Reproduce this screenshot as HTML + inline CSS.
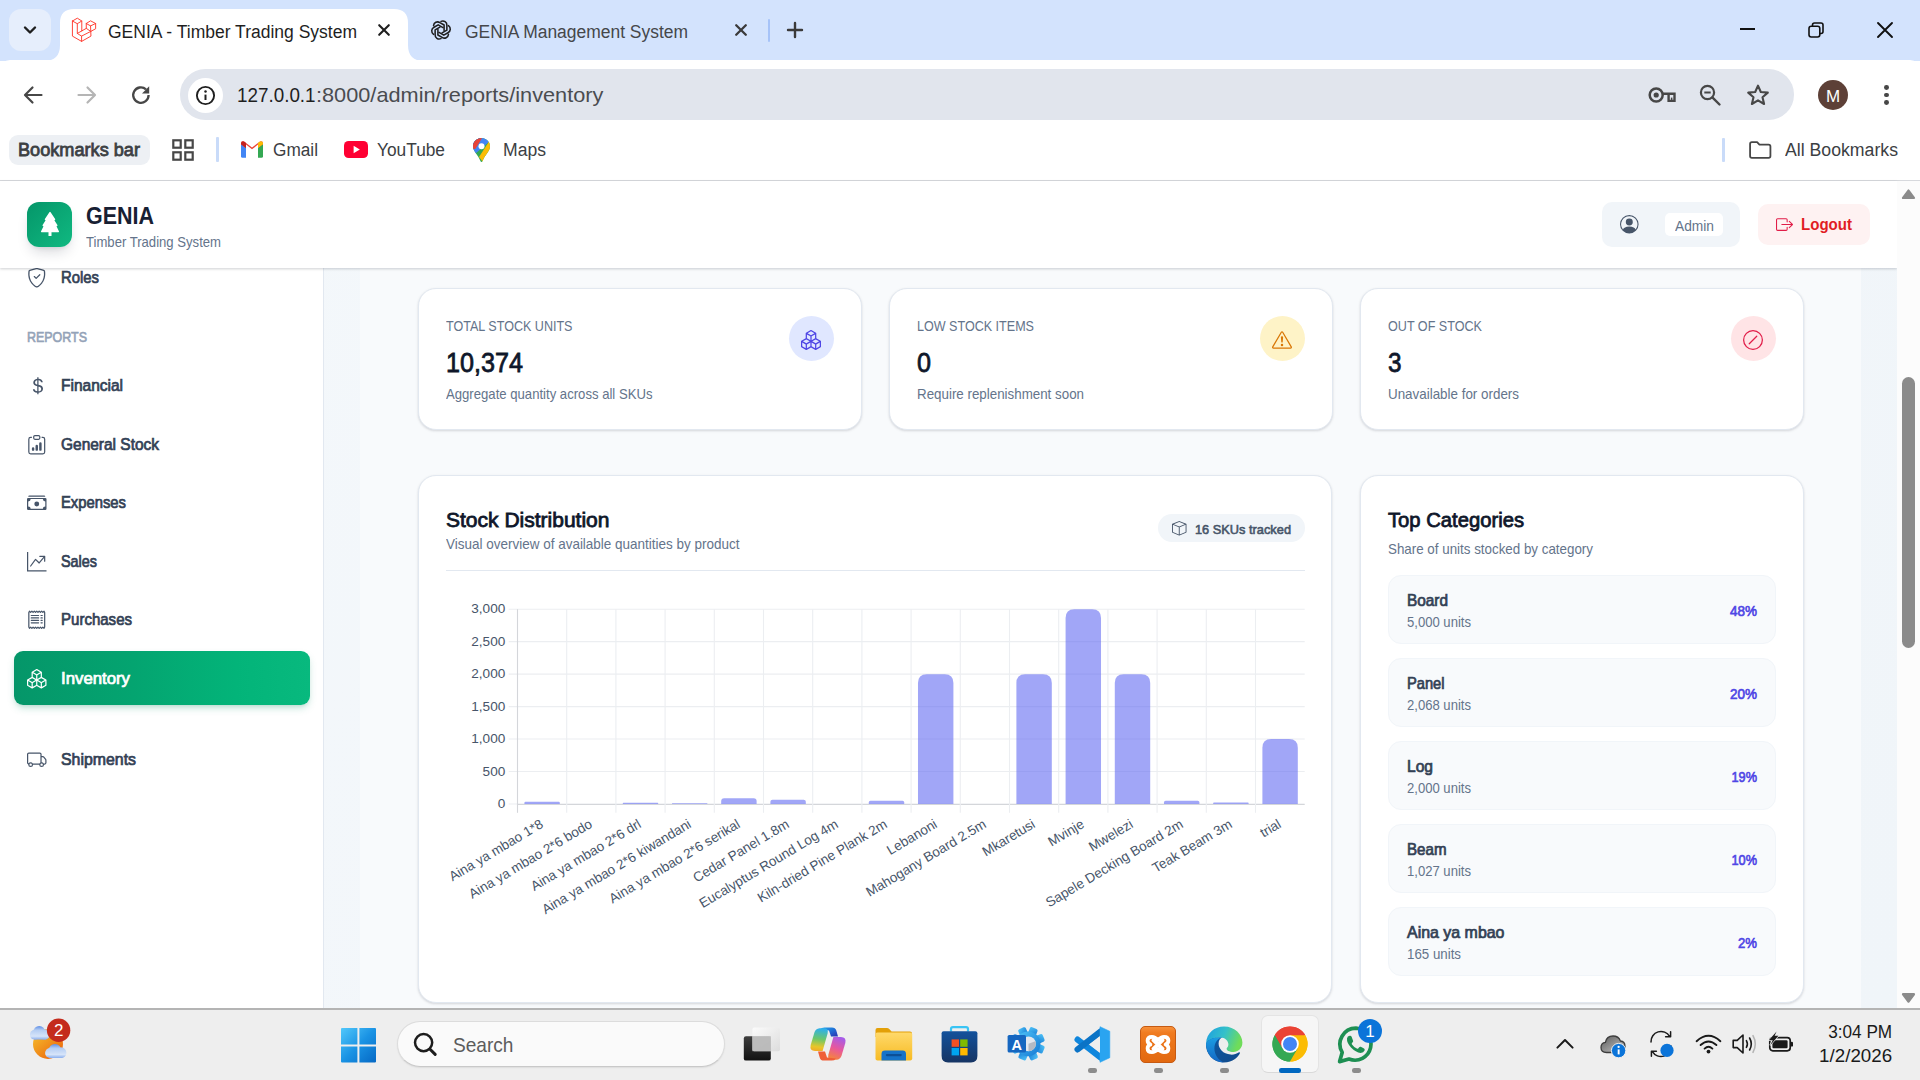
<!DOCTYPE html>
<html><head><meta charset="utf-8"><title>GENIA - Timber Trading System</title>
<style>
html,body{margin:0;padding:0}
body{width:1920px;height:1080px;overflow:hidden;background:#fff;font-family:"Liberation Sans",sans-serif;position:relative}
.a{position:absolute;box-sizing:border-box}
.t{position:absolute;white-space:pre;line-height:1;font-family:"Liberation Sans",sans-serif}
svg{overflow:visible}
</style></head><body>
<div class="a" style="left:0px;top:0px;width:1920px;height:61px;background:#d3e3fd"></div>
<div class="a" style="left:9px;top:9px;width:42px;height:42px;background:#e6eefc;border-radius:12px"></div>
<svg class="a" style="left:23px;top:25px;" width="14" height="10" viewBox="0 0 14 10"><path d="M2 2.5 L7 7.5 L12 2.5" fill="none" stroke="#1f1f1f" stroke-width="2.4" stroke-linecap="round" stroke-linejoin="round"/></svg>
<svg class="a" style="left:44px;top:9px;" width="380" height="52" viewBox="0 0 380 52"><path d="M0 52 Q16 52 16 36 L16 14 Q16 0 30 0 L350 0 Q364 0 364 14 L364 36 Q364 52 380 52 Z" fill="#fff"/></svg>
<div class="a" style="left:0px;top:60px;width:1920px;height:68px;background:#fff;border-radius:10px 10px 0 0"></div>
<svg class="a" style="left:72px;top:18px;" width="24" height="24" viewBox="0 0 24 24"><path d="M0.42 3.03 L5.31 0.18 L9.79 3.03 L5.31 5.68 L0.42 3.03 M0.42 3.03 L0.42 18.1 L9.59 23.4 L18.96 18.1 L18.75 13.42 M5.31 5.68 L5.31 15.46 L9.59 18.1 L9.59 23.4 M9.59 18.1 L18.75 13.42 M9.79 3.03 L9.79 12.9 M5.31 15.46 L14.27 10.37 M14.27 5.48 L18.55 2.83 L23.64 5.48 L18.55 7.92 L14.27 5.48 M14.27 5.48 L14.27 10.37 L18.75 13.42 L23.64 10.77 L23.64 5.48 M18.55 7.92 L18.75 13.42" fill="none" stroke="#ff3a2e" stroke-width="0.95" stroke-linejoin="round" stroke-linecap="round"/></svg>
<span class="t" style="left:108.00px;top:23.25px;font-size:18px;font-weight:400;color:#1f1f1f;transform:scaleX(0.9724);transform-origin:0 0;">GENIA - Timber Trading System</span>
<svg class="a" style="left:378px;top:24px;" width="12" height="12" viewBox="0 0 12 12"><path d="M1.2 1.2 L10.8 10.8 M10.8 1.2 L1.2 10.8" stroke="#1f1f1f" stroke-width="2.1" stroke-linecap="round"/></svg>
<svg class="a" style="left:430px;top:19px;" width="22" height="22" viewBox="0 0 24 24"><g fill="none" stroke="#1f1f1f" stroke-width="1.7" stroke-linecap="round" stroke-linejoin="round"><path d="M12 2.6 C15.2 1.2 18.6 3.4 18.4 6.9 L18.4 12.2 L13.2 15.2" transform="rotate(0 12 12)"/><path d="M12 2.6 C15.2 1.2 18.6 3.4 18.4 6.9 L18.4 12.2 L13.2 15.2" transform="rotate(60 12 12)"/><path d="M12 2.6 C15.2 1.2 18.6 3.4 18.4 6.9 L18.4 12.2 L13.2 15.2" transform="rotate(120 12 12)"/><path d="M12 2.6 C15.2 1.2 18.6 3.4 18.4 6.9 L18.4 12.2 L13.2 15.2" transform="rotate(180 12 12)"/><path d="M12 2.6 C15.2 1.2 18.6 3.4 18.4 6.9 L18.4 12.2 L13.2 15.2" transform="rotate(240 12 12)"/><path d="M12 2.6 C15.2 1.2 18.6 3.4 18.4 6.9 L18.4 12.2 L13.2 15.2" transform="rotate(300 12 12)"/></g></svg>
<span class="t" style="left:465.00px;top:23.25px;font-size:18px;font-weight:400;color:#45474a;transform:scaleX(0.9691);transform-origin:0 0;">GENIA Management System</span>
<svg class="a" style="left:735px;top:24px;" width="12" height="12" viewBox="0 0 12 12"><path d="M1.2 1.2 L10.8 10.8 M10.8 1.2 L1.2 10.8" stroke="#3a3a3a" stroke-width="2.3" stroke-linecap="round"/></svg>
<div class="a" style="left:767.8px;top:18.5px;width:2.7px;height:23px;background:#a6c3f8;border-radius:1.3px"></div>
<svg class="a" style="left:787px;top:22px;" width="16" height="16" viewBox="0 0 16 16"><path d="M8 1 V15 M1 8 H15" stroke="#3a3a3a" stroke-width="2.4" stroke-linecap="round"/></svg>
<div class="a" style="left:1740px;top:28px;width:15px;height:2px;background:#111"></div>
<svg class="a" style="left:1808px;top:22px;" width="16" height="16" viewBox="0 0 16 16"><path d="M4.5 4 V3 Q4.5 1 6.5 1 H13 Q15 1 15 3 V9.5 Q15 11.5 13 11.5 H12" fill="none" stroke="#111" stroke-width="1.6"/><rect x="1" y="4.2" width="10.8" height="10.8" rx="2.2" fill="none" stroke="#111" stroke-width="1.6"/></svg>
<svg class="a" style="left:1877px;top:22px;" width="16" height="16" viewBox="0 0 16 16"><path d="M1 1 L15 15 M15 1 L1 15" stroke="#111" stroke-width="1.9" stroke-linecap="round"/></svg>
<svg class="a" style="left:23px;top:86px;" width="20" height="18" viewBox="0 0 20 18"><path d="M9.5 1.5 L2 9 L9.5 16.5 M2.4 9 H18.5" fill="none" stroke="#474747" stroke-width="2.2" stroke-linecap="round" stroke-linejoin="round"/></svg>
<svg class="a" style="left:77px;top:86px;" width="20" height="18" viewBox="0 0 20 18"><path d="M10.5 1.5 L18 9 L10.5 16.5 M17.6 9 H1.5" fill="none" stroke="#b5b5b5" stroke-width="2.2" stroke-linecap="round" stroke-linejoin="round"/></svg>
<svg class="a" style="left:130px;top:84px;" width="22" height="22" viewBox="0 0 22 22"><path d="M18.6 11 A7.7 7.7 0 1 1 16 5.3" fill="none" stroke="#474747" stroke-width="2.3" stroke-linecap="butt"/><path d="M19.2 2.2 V9.4 H12 Z" fill="#474747"/></svg>
<div class="a" style="left:180px;top:69px;width:1614px;height:50.6px;background:#e1e5ed;border-radius:25.3px"></div>
<div class="a" style="left:188px;top:78px;width:35px;height:35px;background:#fff;border-radius:50%"></div>
<svg class="a" style="left:195px;top:85px;" width="21" height="21" viewBox="0 0 21 21"><circle cx="10.5" cy="10.5" r="8.6" fill="none" stroke="#1f1f1f" stroke-width="1.9"/><path d="M10.5 9.6 V15" stroke="#1f1f1f" stroke-width="2" stroke-linecap="butt"/><circle cx="10.5" cy="6.5" r="1.25" fill="#1f1f1f"/></svg>
<span class="t" style="left:237.00px;top:84.25px;font-size:21px;font-weight:400;color:#1f1f1f;transform:scaleX(0.8973);transform-origin:0 0;">127.0.0.1</span>
<span class="t" style="left:315.80px;top:84.25px;font-size:21px;font-weight:400;color:#4a4c50;transform:scaleX(1.0345);transform-origin:0 0;">:8000/admin/reports/inventory</span>
<svg class="a" style="left:1648px;top:86px;" width="28" height="18" viewBox="0 0 28 18"><circle cx="8.2" cy="9" r="6.5" fill="none" stroke="#474747" stroke-width="2.5"/><circle cx="8.2" cy="9" r="2.6" fill="#474747"/><path d="M14.4 7.8 H26.5 V14.9 H20.6 V9" fill="none" stroke="#474747" stroke-width="2.4" stroke-linejoin="miter"/><rect x="22.9" y="11.6" width="1.5" height="3.4" fill="#474747"/></svg>
<svg class="a" style="left:1698px;top:83px;" width="24" height="24" viewBox="0 0 24 24"><circle cx="9.5" cy="9.5" r="6.6" fill="none" stroke="#474747" stroke-width="2.2"/><path d="M14.6 14.6 L21.5 21.5" stroke="#474747" stroke-width="2.4" stroke-linecap="round"/><path d="M6.3 9.5 H12.7" stroke="#474747" stroke-width="2"/></svg>
<svg class="a" style="left:1746px;top:83px;" width="24" height="24" viewBox="0 0 24 24"><path d="M12 2.6 L14.8 9 L21.8 9.6 L16.5 14.2 L18.1 21 L12 17.4 L5.9 21 L7.5 14.2 L2.2 9.6 L9.2 9 Z" fill="none" stroke="#474747" stroke-width="2.1" stroke-linejoin="round"/></svg>
<div class="a" style="left:1818px;top:80px;width:30px;height:30px;background:#5d4037;border-radius:50%"></div>
<span class="t" style="left:1825.91px;top:88.25px;font-size:17px;font-weight:400;color:#fff;">M</span>
<div class="a" style="left:1884.4px;top:84.8px;width:4.8px;height:4.8px;background:#474747;border-radius:50%"></div>
<div class="a" style="left:1884.4px;top:92.6px;width:4.8px;height:4.8px;background:#474747;border-radius:50%"></div>
<div class="a" style="left:1884.4px;top:100.39999999999999px;width:4.8px;height:4.8px;background:#474747;border-radius:50%"></div>
<div class="a" style="left:0px;top:128px;width:1920px;height:52px;background:#fff"></div>
<div class="a" style="left:0px;top:180px;width:1920px;height:1px;background:#d7d9dd"></div>
<div class="a" style="left:9px;top:135px;width:141px;height:30px;background:#edf0f4;border-radius:9px"></div>
<span class="t" style="left:18.00px;top:141.25px;font-size:18px;font-weight:400;-webkit-text-stroke:0.78px #3c4043;color:#3c4043;transform:scaleX(1.0079);transform-origin:0 0;">Bookmarks bar</span>
<svg class="a" style="left:172px;top:139px;" width="22" height="22" viewBox="0 0 22 22"><rect x="1.3" y="1.3" width="7.4" height="7.4" fill="none" stroke="#474747" stroke-width="2.2"/><rect x="1.3" y="13.3" width="7.4" height="7.4" fill="none" stroke="#474747" stroke-width="2.2"/><rect x="13.3" y="1.3" width="7.4" height="7.4" fill="none" stroke="#474747" stroke-width="2.2"/><rect x="13.3" y="13.3" width="7.4" height="7.4" fill="none" stroke="#474747" stroke-width="2.2"/></svg>
<div class="a" style="left:215.9px;top:137px;width:2.8px;height:25px;background:#c9dbf9;border-radius:1px"></div>
<svg class="a" style="left:241px;top:141px;" width="22" height="17" viewBox="0 0 22 17"><path d="M0 2.2 V15.2 Q0 16.7 1.5 16.7 H5 V6.3 Z" fill="#4285f4"/><path d="M22 2.2 V15.2 Q22 16.7 20.5 16.7 H17 V6.3 Z" fill="#34a853"/>
<path d="M0 2.4 Q0 0.3 2 0.3 Q2.8 0.3 3.4 0.8 L11 6.6 L18.6 0.8 Q19.2 0.3 20 0.3 Q22 0.3 22 2.4 V3.2 L17 7 V3.6 L11 8.2 L5 3.6 V7 L0 3.2 Z" fill="#ea4335"/><path d="M0 2.4 V3.2 L5 7 V2.1 L3.4 0.8 Q2.8 0.3 2 0.3 Q0 0.3 0 2.4Z" fill="#c5221f"/><path d="M22 2.4 V3.2 L17 7 V2.1 L18.6 0.8 Q19.2 0.3 20 0.3 Q22 0.3 22 2.4Z" fill="#fbbc04"/></svg>
<span class="t" style="left:273.00px;top:141.25px;font-size:18px;font-weight:400;color:#3c4043;transform:scaleX(0.9571);transform-origin:0 0;">Gmail</span>
<svg class="a" style="left:344px;top:141px;" width="24" height="17" viewBox="0 0 24 17"><rect x="0" y="0" width="24" height="17" rx="4.6" fill="#ff0033"/><path d="M9.6 4.8 L15.8 8.5 L9.6 12.2 Z" fill="#fff"/></svg>
<span class="t" style="left:377.00px;top:141.25px;font-size:18px;font-weight:400;color:#3c4043;transform:scaleX(0.9613);transform-origin:0 0;">YouTube</span>
<svg class="a" style="left:473px;top:138px;" width="17" height="24" viewBox="0 0 17 24"><defs><clipPath id="pin"><path d="M8.5 0 C3.8 0 0 3.7 0 8.3 C0 13.5 5.2 17 7.3 22.8 Q7.8 24 8.5 24 Q9.2 24 9.7 22.8 C11.8 17 17 13.5 17 8.3 C17 3.7 13.2 0 8.5 0 Z"/></clipPath></defs>
<g clip-path="url(#pin)"><rect width="17" height="24" fill="#34a853"/><path d="M0 0 H17 L17 3 L2 16 L0 14 Z" fill="#4285f4"/><path d="M0 0 H8 L0 9 Z" fill="#1a73e8"/><path d="M0 0 H9 L13 1 L2 13 L0 10Z" fill="#ea4335" opacity="0"/><path d="M17 2 L17 12 L10 24 L6 19 Z" fill="#fbbc04"/><path d="M0 2 L5.5 6 L2.2 11 L0 11 Z" fill="#ea4335"/><path d="M2 0 H9 L5.5 6 L0 3 Z" fill="#ea4335"/></g><circle cx="8.5" cy="8.2" r="3" fill="#fff"/></svg>
<span class="t" style="left:503.00px;top:141.25px;font-size:18px;font-weight:400;color:#3c4043;transform:scaleX(0.9769);transform-origin:0 0;">Maps</span>
<div class="a" style="left:1722.2px;top:138px;width:2.8px;height:24px;background:#c9dbf9;border-radius:1px"></div>
<svg class="a" style="left:1748.3px;top:141px;" width="24.5" height="18" viewBox="0 0 25 20"><path d="M1.2 3.2 Q1.2 1.2 3.2 1.2 H9 L11.6 4 H21.8 Q23.8 4 23.8 6 V16.8 Q23.8 18.8 21.8 18.8 H3.2 Q1.2 18.8 1.2 16.8 Z" fill="none" stroke="#474747" stroke-width="2" stroke-linejoin="round"/></svg>
<span class="t" style="left:1785.00px;top:141.25px;font-size:18px;font-weight:400;color:#3c4043;transform:scaleX(0.9823);transform-origin:0 0;">All Bookmarks</span>
<div class="a" style="left:0px;top:181px;width:1897px;height:827px;background:linear-gradient(115deg,#f4f8fb 0%,#f2f6fa 50%,#f0f5f9 100%)"></div>
<div class="a" style="left:360px;top:181px;width:1501px;height:827px;background:#f8fafc"></div>
<div class="a" style="left:0px;top:181px;width:324px;height:827px;background:#fff;border-right:1px solid #e2e8f0"></div>
<svg class="a" style="left:27px;top:268px" width="19.5" height="19.5" viewBox="0 0 16 16" fill="#475569"><path d="M5.338 1.59a61 61 0 0 0-2.837.856.48.48 0 0 0-.328.39c-.554 4.157.726 7.19 2.253 9.188a10.7 10.7 0 0 0 2.287 2.233c.346.244.652.42.893.533q.18.085.293.118a1 1 0 0 0 .101.025 1 1 0 0 0 .1-.025q.114-.034.294-.118c.24-.113.547-.29.893-.533a10.7 10.7 0 0 0 2.287-2.233c1.527-1.997 2.807-5.031 2.253-9.188a.48.48 0 0 0-.328-.39c-.651-.213-1.75-.56-2.837-.855C9.552 1.29 8.531 1.067 8 1.067c-.53 0-1.552.223-2.662.524zM5.072.56C6.157.265 7.31 0 8 0s1.843.265 2.928.56c1.11.3 2.229.655 2.887.87a1.54 1.54 0 0 1 1.044 1.262c.596 4.477-.787 7.795-2.465 9.99a11.8 11.8 0 0 1-2.517 2.453 7 7 0 0 1-1.048.625c-.28.132-.581.24-.829.24s-.548-.108-.829-.24a7 7 0 0 1-1.048-.625 11.8 11.8 0 0 1-2.517-2.453C1.928 10.487.545 7.169 1.141 2.692A1.54 1.54 0 0 1 2.185 1.43 63 63 0 0 1 5.072.56"/><path d="M10.854 5.146a.5.5 0 0 1 0 .708l-3 3a.5.5 0 0 1-.708 0l-1.500-1.500a.5.5 0 1 1 .708-.708L7.5 7.793l2.646-2.647a.5.5 0 0 1 .708 0"/></svg>
<span class="t" style="left:61.00px;top:269.75px;font-size:16px;font-weight:400;-webkit-text-stroke:0.72px #334155;color:#334155;transform:scaleX(0.9290);transform-origin:0 0;">Roles</span>
<span class="t" style="left:27.00px;top:330.25px;font-size:14px;font-weight:400;-webkit-text-stroke:0.63px #94a3b8;color:#94a3b8;transform:scaleX(0.8897);transform-origin:0 0;">REPORTS</span>
<svg class="a" style="left:27.5px;top:376px" width="19.5" height="19.5" viewBox="0 0 16 16" fill="#475569"><path d="M4 10.781c.148 1.667 1.513 2.85 3.591 3.003V15h1.043v-1.216c2.27-.179 3.678-1.438 3.678-3.3 0-1.59-.947-2.51-2.956-3.028l-.722-.187V3.467c1.122.11 1.879.714 2.07 1.616h1.47c-.166-1.6-1.54-2.748-3.54-2.875V1H7.591v1.233c-1.939.23-3.27 1.472-3.27 3.156 0 1.454.966 2.483 2.661 2.917l.61.162v4.031c-1.149-.17-1.94-.8-2.131-1.718zm3.391-3.836c-1.043-.263-1.6-.825-1.6-1.616 0-.944.704-1.641 1.8-1.828v3.495l-.2-.05zm1.591 1.872c1.287.323 1.852.859 1.852 1.769 0 1.097-.826 1.828-2.2 1.939V8.73z"/></svg>
<span class="t" style="left:61.00px;top:377.75px;font-size:16px;font-weight:400;-webkit-text-stroke:0.72px #334155;color:#334155;transform:scaleX(0.9683);transform-origin:0 0;">Financial</span>
<svg class="a" style="left:27px;top:435px" width="19.5" height="19.5" viewBox="0 0 16 16" fill="#475569"><path d="M4 11a1 1 0 1 1 2 0v1a1 1 0 1 1-2 0zm6-4a1 1 0 1 1 2 0v5a1 1 0 1 1-2 0zM7 9a1 1 0 0 1 2 0v3a1 1 0 1 1-2 0z"/><path d="M4 1.5H3a2 2 0 0 0-2 2V14a2 2 0 0 0 2 2h10a2 2 0 0 0 2-2V3.500a2 2 0 0 0-2-2h-1v1h1a1 1 0 0 1 1 1V14a1 1 0 0 1-1 1H3a1 1 0 0 1-1-1V3.500a1 1 0 0 1 1-1h1z"/><path d="M9.5 1a.5.5 0 0 1 .5.5v1a.5.5 0 0 1-.5.5h-3a.5.5 0 0 1-.5-.5v-1a.5.5 0 0 1 .5-.5zm-3-1A1.500 1.500 0 0 0 5 1.500v1A1.500 1.500 0 0 0 6.500 4h3A1.500 1.500 0 0 0 11 2.500v-1A1.500 1.500 0 0 0 9.500 0z"/></svg>
<span class="t" style="left:61.00px;top:436.75px;font-size:16px;font-weight:400;-webkit-text-stroke:0.72px #334155;color:#334155;transform:scaleX(0.9666);transform-origin:0 0;">General Stock</span>
<svg class="a" style="left:27px;top:493px" width="19.5" height="19.5" viewBox="0 0 16 16" fill="#475569"><path d="M1 3a1 1 0 0 1 1-1h12a1 1 0 0 1 1 1zm7 8a2 2 0 1 0 0-4 2 2 0 0 0 0 4"/><path d="M0 5a1 1 0 0 1 1-1h14a1 1 0 0 1 1 1v8a1 1 0 0 1-1 1H1a1 1 0 0 1-1-1zm3 0a2 2 0 0 1-2 2v4a2 2 0 0 1 2 2h10a2 2 0 0 1 2-2V7a2 2 0 0 1-2-2z"/></svg>
<span class="t" style="left:61.00px;top:494.75px;font-size:16px;font-weight:400;-webkit-text-stroke:0.72px #334155;color:#334155;transform:scaleX(0.9251);transform-origin:0 0;">Expenses</span>
<svg class="a" style="left:27px;top:551.5px" width="19.5" height="19.5" viewBox="0 0 16 16" fill="#475569"><path fill-rule="evenodd" d="M0 0h1v15h15v1H0zm10 3.500a.5.5 0 0 1 .5-.5h4a.5.5 0 0 1 .5.5v4a.5.5 0 0 1-1 0V4.900l-3.613 4.417a.5.5 0 0 1-.74.037L7.060 6.767l-3.656 5.027a.5.5 0 0 1-.808-.588l4-5.500a.5.5 0 0 1 .758-.060l2.609 2.610L13.445 4H10.500a.5.5 0 0 1-.5-.5"/></svg>
<span class="t" style="left:61.00px;top:553.75px;font-size:16px;font-weight:400;-webkit-text-stroke:0.72px #334155;color:#334155;transform:scaleX(0.8993);transform-origin:0 0;">Sales</span>
<svg class="a" style="left:27px;top:610px" width="19.5" height="19.5" viewBox="0 0 16 16" fill="#475569"><path d="M1.920.506a.5.5 0 0 1 .434.140L3 1.293l.646-.647a.5.5 0 0 1 .708 0L5 1.293l.646-.647a.5.5 0 0 1 .708 0L7 1.293l.646-.647a.5.5 0 0 1 .708 0L9 1.293l.646-.647a.5.5 0 0 1 .708 0l.646.647.646-.647a.5.5 0 0 1 .708 0l.646.647.646-.647a.5.5 0 0 1 .801.130l.5 1A.5.5 0 0 1 15 2v12a.5.5 0 0 1-.053.224l-.5 1a.5.5 0 0 1-.8.130L13 14.707l-.646.647a.5.5 0 0 1-.708 0L11 14.707l-.646.647a.5.5 0 0 1-.708 0L9 14.707l-.646.647a.5.5 0 0 1-.708 0L7 14.707l-.646.647a.5.5 0 0 1-.708 0L5 14.707l-.646.647a.5.5 0 0 1-.708 0L3 14.707l-.646.647a.5.5 0 0 1-.801-.130l-.5-1A.5.5 0 0 1 1 14V2a.5.5 0 0 1 .053-.224l.5-1a.5.5 0 0 1 .367-.270m.217 1.338L2 2.118v11.764l.137.274.510-.510a.5.5 0 0 1 .707 0l.646.647.646-.646a.5.5 0 0 1 .708 0l.646.646.646-.646a.5.5 0 0 1 .708 0l.646.646.646-.646a.5.5 0 0 1 .708 0l.646.646.646-.646a.5.5 0 0 1 .708 0l.646.646.646-.646a.5.5 0 0 1 .708 0l.509.509.137-.274V2.118l-.137-.274-.510.510a.5.5 0 0 1-.707 0L12 1.707l-.646.647a.5.5 0 0 1-.708 0L10 1.707l-.646.647a.5.5 0 0 1-.708 0L8 1.707l-.646.647a.5.5 0 0 1-.708 0L6 1.707l-.646.647a.5.5 0 0 1-.708 0L4 1.707l-.646.647a.5.5 0 0 1-.708 0z"/><path d="M3 4.500a.5.5 0 0 1 .5-.5h6a.5.5 0 1 1 0 1h-6a.5.5 0 0 1-.5-.5m0 2a.5.5 0 0 1 .5-.5h6a.5.5 0 1 1 0 1h-6a.5.5 0 0 1-.5-.5m0 2a.5.5 0 0 1 .5-.5h6a.5.5 0 1 1 0 1h-6a.5.5 0 0 1-.5-.5m0 2a.5.5 0 0 1 .5-.5h6a.5.5 0 0 1 0 1h-6a.5.5 0 0 1-.5-.5m8-6a.5.5 0 0 1 .5-.5h1a.5.5 0 0 1 0 1h-1a.5.5 0 0 1-.5-.5m0 2a.5.5 0 0 1 .5-.5h1a.5.5 0 0 1 0 1h-1a.5.5 0 0 1-.5-.5m0 2a.5.5 0 0 1 .5-.5h1a.5.5 0 0 1 0 1h-1a.5.5 0 0 1-.5-.5m0 2a.5.5 0 0 1 .5-.5h1a.5.5 0 0 1 0 1h-1a.5.5 0 0 1-.5-.5"/></svg>
<span class="t" style="left:61.00px;top:611.75px;font-size:16px;font-weight:400;-webkit-text-stroke:0.72px #334155;color:#334155;transform:scaleX(0.9392);transform-origin:0 0;">Purchases</span>
<div class="a" style="left:14px;top:651px;width:296px;height:54px;background:linear-gradient(90deg,#059669 0%,#04a470 40%,#03b479 75%,#08b97e 100%);border-radius:9px;box-shadow:0 4px 8px -2px rgba(5,150,105,.30),0 2px 4px -2px rgba(0,0,0,.10)"></div>
<svg class="a" style="left:27px;top:668.5px" width="19.5" height="19.5" viewBox="0 0 16 16" fill="#fff"><path d="M7.752.066a.5.5 0 0 1 .496 0l3.75 2.143a.5.5 0 0 1 .252.434v3.995l3.498 2A.5.5 0 0 1 16 9.07v4.286a.5.5 0 0 1-.252.434l-3.75 2.143a.5.5 0 0 1-.496 0l-3.502-2-3.502 2.001a.5.5 0 0 1-.496 0l-3.75-2.143A.5.5 0 0 1 0 13.357V9.071a.5.5 0 0 1 .252-.434L3.75 6.638V2.643a.5.5 0 0 1 .252-.434zM4.25 7.504 1.508 9.071l2.742 1.567 2.742-1.567zM7.5 9.933l-2.75 1.571v3.134l2.75-1.571zm1 3.134 2.75 1.57v-3.133L8.5 9.933zm.508-3.996 2.742 1.567 2.742-1.567-2.742-1.567zm2.242-2.433V3.504L8.5 5.076V8.21zM7.5 8.21V5.076L4.75 3.504v3.134zM5.258 2.643 8 4.21l2.742-1.567L8 1.076zM15 9.933l-2.75 1.571v3.134L15 13.067zM3.75 14.638v-3.134L1 9.933v3.134z"/></svg>
<span class="t" style="left:61.00px;top:670.75px;font-size:16px;font-weight:400;-webkit-text-stroke:0.72px #fff;color:#fff;transform:scaleX(1.0484);transform-origin:0 0;">Inventory</span>
<svg class="a" style="left:27px;top:750px" width="19.5" height="19.5" viewBox="0 0 16 16" fill="#475569"><path d="M0 3.500A1.500 1.500 0 0 1 1.500 2h9A1.500 1.500 0 0 1 12 3.500V5h1.020a1.500 1.500 0 0 1 1.170.563l1.481 1.850a1.500 1.500 0 0 1 .329.938V10.500a1.500 1.500 0 0 1-1.500 1.500H14a2 2 0 1 1-4 0H5a2 2 0 1 1-3.998-.085A1.500 1.500 0 0 1 0 10.500zm1.294 7.456A2 2 0 0 1 4.732 11h5.536a2 2 0 0 1 .732-.732V3.500a.5.5 0 0 0-.5-.5h-9a.5.5 0 0 0-.5.5v7a.5.5 0 0 0 .294.456M12 10a2 2 0 0 1 1.732 1h.768a.5.5 0 0 0 .5-.5V8.350a.5.5 0 0 0-.110-.312l-1.480-1.850A.5.5 0 0 0 13.020 6H12zm-9 1a1 1 0 1 0 0 2 1 1 0 0 0 0-2m9 0a1 1 0 1 0 0 2 1 1 0 0 0 0-2"/></svg>
<span class="t" style="left:61.00px;top:751.75px;font-size:16px;font-weight:400;-webkit-text-stroke:0.72px #334155;color:#334155;transform:scaleX(0.9921);transform-origin:0 0;">Shipments</span>
<div class="a" style="left:418.4px;top:288.4px;width:443.8px;height:141.4px;background:#fff;border:1px solid #e2e8f0;border-radius:18px;box-shadow:0 1px 3px rgba(15,23,42,.10),0 1px 2px rgba(15,23,42,.06)"></div>
<span class="t" style="left:446.00px;top:319.00px;font-size:14.5px;font-weight:400;color:#64748b;transform:scaleX(0.8658);transform-origin:0 0;">TOTAL STOCK UNITS</span>
<span class="t" style="left:446.00px;top:349.00px;font-size:27.5px;font-weight:400;-webkit-text-stroke:0.78px #0f172a;color:#0f172a;transform:scaleX(0.9153);transform-origin:0 0;">10,374</span>
<span class="t" style="left:446.00px;top:387.00px;font-size:14.5px;font-weight:400;color:#64748b;transform:scaleX(0.9053);transform-origin:0 0;">Aggregate quantity across all SKUs</span>
<div class="a" style="left:789.0px;top:316px;width:45px;height:45px;background:#e0e7ff;border-radius:50%"></div>
<svg class="a" style="left:800.7px;top:329.9px" width="20" height="20" viewBox="0 0 16 16" fill="#4f46e5"><path d="M7.752.066a.5.5 0 0 1 .496 0l3.75 2.143a.5.5 0 0 1 .252.434v3.995l3.498 2A.5.5 0 0 1 16 9.07v4.286a.5.5 0 0 1-.252.434l-3.75 2.143a.5.5 0 0 1-.496 0l-3.502-2-3.502 2.001a.5.5 0 0 1-.496 0l-3.75-2.143A.5.5 0 0 1 0 13.357V9.071a.5.5 0 0 1 .252-.434L3.75 6.638V2.643a.5.5 0 0 1 .252-.434zM4.25 7.504 1.508 9.071l2.742 1.567 2.742-1.567zM7.5 9.933l-2.75 1.571v3.134l2.75-1.571zm1 3.134 2.75 1.57v-3.133L8.5 9.933zm.508-3.996 2.742 1.567 2.742-1.567-2.742-1.567zm2.242-2.433V3.504L8.5 5.076V8.21zM7.5 8.21V5.076L4.75 3.504v3.134zM5.258 2.643 8 4.21l2.742-1.567L8 1.076zM15 9.933l-2.75 1.571v3.134L15 13.067zM3.75 14.638v-3.134L1 9.933v3.134z"/></svg>
<div class="a" style="left:889.4px;top:288.4px;width:443.8px;height:141.4px;background:#fff;border:1px solid #e2e8f0;border-radius:18px;box-shadow:0 1px 3px rgba(15,23,42,.10),0 1px 2px rgba(15,23,42,.06)"></div>
<span class="t" style="left:917.00px;top:319.00px;font-size:14.5px;font-weight:400;color:#64748b;transform:scaleX(0.8661);transform-origin:0 0;">LOW STOCK ITEMS</span>
<span class="t" style="left:917.00px;top:349.00px;font-size:27.5px;font-weight:400;-webkit-text-stroke:0.78px #0f172a;color:#0f172a;transform:scaleX(0.9152);transform-origin:0 0;">0</span>
<span class="t" style="left:917.00px;top:387.00px;font-size:14.5px;font-weight:400;color:#64748b;transform:scaleX(0.9208);transform-origin:0 0;">Require replenishment soon</span>
<div class="a" style="left:1260.0px;top:316px;width:45px;height:45px;background:#fef3c7;border-radius:50%"></div>
<svg class="a" style="left:1271.7px;top:329.9px" width="20" height="20" viewBox="0 0 16 16" fill="#d97706"><path d="M7.938 2.016A.13.13 0 0 1 8.002 2a.13.13 0 0 1 .063.016.15.15 0 0 1 .054.057l6.857 11.667c.036.06.035.124.002.183a.2.2 0 0 1-.054.06.1.1 0 0 1-.066.017H1.146a.1.1 0 0 1-.066-.017.2.2 0 0 1-.054-.06.18.18 0 0 1 .002-.183L7.884 2.073a.15.15 0 0 1 .054-.057m1.044-.45a1.13 1.13 0 0 0-1.96 0L.165 13.233c-.457.778.091 1.767.98 1.767h13.713c.889 0 1.438-.99.98-1.767z"/><path d="M7.002 12a1 1 0 1 1 2 0 1 1 0 0 1-2 0M7.1 5.995a.905.905 0 1 1 1.8 0l-.35 3.507a.552.552 0 0 1-1.1 0z"/></svg>
<div class="a" style="left:1360.4px;top:288.4px;width:443.8px;height:141.4px;background:#fff;border:1px solid #e2e8f0;border-radius:18px;box-shadow:0 1px 3px rgba(15,23,42,.10),0 1px 2px rgba(15,23,42,.06)"></div>
<span class="t" style="left:1388.00px;top:319.00px;font-size:14.5px;font-weight:400;color:#64748b;transform:scaleX(0.8685);transform-origin:0 0;">OUT OF STOCK</span>
<span class="t" style="left:1388.00px;top:349.00px;font-size:27.5px;font-weight:400;-webkit-text-stroke:0.78px #0f172a;color:#0f172a;transform:scaleX(0.8825);transform-origin:0 0;">3</span>
<span class="t" style="left:1388.00px;top:387.00px;font-size:14.5px;font-weight:400;color:#64748b;transform:scaleX(0.9234);transform-origin:0 0;">Unavailable for orders</span>
<div class="a" style="left:1731.0px;top:316px;width:45px;height:45px;background:#ffe4e6;border-radius:50%"></div>
<svg class="a" style="left:1742.7px;top:329.9px" width="20" height="20" viewBox="0 0 16 16" fill="#e11d48"><path d="M8 15A7 7 0 1 1 8 1a7 7 0 0 1 0 14m0 1A8 8 0 1 0 8 0a8 8 0 0 0 0 16"/><path d="M11.354 4.646a.5.5 0 0 0-.708 0l-6 6a.5.5 0 0 0 .708.708l6-6a.5.5 0 0 0 0-.708"/></svg>
<div class="a" style="left:418.4px;top:475.4px;width:914px;height:528px;background:#fff;border:1px solid #e2e8f0;border-radius:18px;box-shadow:0 1px 3px rgba(15,23,42,.10),0 1px 2px rgba(15,23,42,.06)"></div>
<div class="a" style="left:1360.4px;top:475.4px;width:443.6px;height:528px;background:#fff;border:1px solid #e2e8f0;border-radius:18px;box-shadow:0 1px 3px rgba(15,23,42,.10),0 1px 2px rgba(15,23,42,.06)"></div>
<span class="t" style="left:446.00px;top:510.25px;font-size:20px;font-weight:400;-webkit-text-stroke:0.78px #0f172a;color:#0f172a;transform:scaleX(1.0506);transform-origin:0 0;">Stock Distribution</span>
<span class="t" style="left:446.00px;top:537.00px;font-size:14.5px;font-weight:400;color:#64748b;transform:scaleX(0.9297);transform-origin:0 0;">Visual overview of available quantities by product</span>
<div class="a" style="left:1158px;top:514px;width:147px;height:27.5px;background:#f1f5f9;border-radius:14px"></div>
<svg class="a" style="left:1171.5px;top:520.5px" width="14.5" height="14.5" viewBox="0 0 16 16" fill="#475569"><path d="M8.186 1.113a.5.5 0 0 0-.372 0L1.846 3.5 8 5.961 14.154 3.5zM15 4.239l-6.5 2.6v7.922l6.5-2.6V4.24zM7.5 14.762V6.838L1 4.239v7.923zM7.443.184a1.5 1.5 0 0 1 1.114 0l7.129 2.852A.5.5 0 0 1 16 3.5v8.662a1 1 0 0 1-.629.928l-7.185 2.874a.5.5 0 0 1-.372 0L.63 13.09a1 1 0 0 1-.63-.928V3.5a.5.5 0 0 1 .314-.464z"/></svg>
<span class="t" style="left:1194.50px;top:523.00px;font-size:13.5px;font-weight:400;-webkit-text-stroke:0.61px #475569;color:#475569;transform:scaleX(0.9477);transform-origin:0 0;">16 SKUs tracked</span>
<div class="a" style="left:446px;top:570px;width:859px;height:1px;background:#e2e8f0"></div>
<span class="t" style="left:1388.00px;top:510.25px;font-size:20px;font-weight:400;-webkit-text-stroke:0.78px #0f172a;color:#0f172a;transform:scaleX(1.0109);transform-origin:0 0;">Top Categories</span>
<span class="t" style="left:1388.00px;top:542.00px;font-size:14.5px;font-weight:400;color:#64748b;transform:scaleX(0.9215);transform-origin:0 0;">Share of units stocked by category</span>
<div class="a" style="left:1388px;top:575px;width:388px;height:69px;background:#f8fafc;border:1px solid #f1f5f9;border-radius:13px"></div>
<span class="t" style="left:1407.00px;top:592.00px;font-size:16.5px;font-weight:400;-webkit-text-stroke:0.74px #334155;color:#334155;transform:scaleX(0.9312);transform-origin:0 0;">Board</span>
<span class="t" style="left:1407.00px;top:615.00px;font-size:14.5px;font-weight:400;color:#64748b;transform:scaleX(0.9020);transform-origin:0 0;">5,000 units</span>
<span class="t" style="left:1727.97px;top:604.00px;font-size:14.5px;font-weight:400;-webkit-text-stroke:0.65px #4f46e5;color:#4f46e5;transform:scaleX(0.9300);transform-origin:100% 0;">48%</span>
<div class="a" style="left:1388px;top:658px;width:388px;height:69px;background:#f8fafc;border:1px solid #f1f5f9;border-radius:13px"></div>
<span class="t" style="left:1407.00px;top:675.00px;font-size:16.5px;font-weight:400;-webkit-text-stroke:0.74px #334155;color:#334155;transform:scaleX(0.8886);transform-origin:0 0;">Panel</span>
<span class="t" style="left:1407.00px;top:698.00px;font-size:14.5px;font-weight:400;color:#64748b;transform:scaleX(0.9020);transform-origin:0 0;">2,068 units</span>
<span class="t" style="left:1727.97px;top:687.00px;font-size:14.5px;font-weight:400;-webkit-text-stroke:0.65px #4f46e5;color:#4f46e5;transform:scaleX(0.9300);transform-origin:100% 0;">20%</span>
<div class="a" style="left:1388px;top:741px;width:388px;height:69px;background:#f8fafc;border:1px solid #f1f5f9;border-radius:13px"></div>
<span class="t" style="left:1407.00px;top:758.00px;font-size:16.5px;font-weight:400;-webkit-text-stroke:0.74px #334155;color:#334155;transform:scaleX(0.9444);transform-origin:0 0;">Log</span>
<span class="t" style="left:1407.00px;top:781.00px;font-size:14.5px;font-weight:400;color:#64748b;transform:scaleX(0.9020);transform-origin:0 0;">2,000 units</span>
<span class="t" style="left:1727.97px;top:770.00px;font-size:14.5px;font-weight:400;-webkit-text-stroke:0.65px #4f46e5;color:#4f46e5;transform:scaleX(0.8784);transform-origin:100% 0;">19%</span>
<div class="a" style="left:1388px;top:824px;width:388px;height:69px;background:#f8fafc;border:1px solid #f1f5f9;border-radius:13px"></div>
<span class="t" style="left:1407.00px;top:841.00px;font-size:16.5px;font-weight:400;-webkit-text-stroke:0.74px #334155;color:#334155;transform:scaleX(0.9163);transform-origin:0 0;">Beam</span>
<span class="t" style="left:1407.00px;top:864.00px;font-size:14.5px;font-weight:400;color:#64748b;transform:scaleX(0.9020);transform-origin:0 0;">1,027 units</span>
<span class="t" style="left:1727.97px;top:853.00px;font-size:14.5px;font-weight:400;-webkit-text-stroke:0.65px #4f46e5;color:#4f46e5;transform:scaleX(0.8784);transform-origin:100% 0;">10%</span>
<div class="a" style="left:1388px;top:907px;width:388px;height:69px;background:#f8fafc;border:1px solid #f1f5f9;border-radius:13px"></div>
<span class="t" style="left:1407.00px;top:924.00px;font-size:16.5px;font-weight:400;-webkit-text-stroke:0.74px #334155;color:#334155;transform:scaleX(0.9662);transform-origin:0 0;">Aina ya mbao</span>
<span class="t" style="left:1407.00px;top:947.00px;font-size:14.5px;font-weight:400;color:#64748b;transform:scaleX(0.9174);transform-origin:0 0;">165 units</span>
<span class="t" style="left:1736.03px;top:936.00px;font-size:14.5px;font-weight:400;-webkit-text-stroke:0.65px #4f46e5;color:#4f46e5;transform:scaleX(0.9061);transform-origin:100% 0;">2%</span>
<div class="a" style="left:0px;top:181px;width:1897px;height:86.5px;background:#fff;box-shadow:0 1px 3px rgba(15,23,42,.13),0 1px 2px rgba(15,23,42,.08)"></div>
<div class="a" style="left:27px;top:202px;width:45px;height:45px;background:linear-gradient(135deg,#059669,#10b981);border-radius:12px;box-shadow:0 8px 14px -4px rgba(15,23,42,.18),0 3px 5px -3px rgba(15,23,42,.12)"></div>
<svg class="a" style="left:37.8px;top:212.2px" width="24" height="24" viewBox="0 0 16 16" fill="#fff"><path d="M8.416.223a.5.5 0 0 0-.832 0l-3 4.500A.5.5 0 0 0 5 5.500h.098L3.076 8.735A.5.5 0 0 0 3.500 9.500h.191l-1.638 3.276a.5.5 0 0 0 .447.724H7V16h2v-2.500h4.500a.5.5 0 0 0 .447-.724L12.310 9.500h.191a.5.5 0 0 0 .424-.765L10.902 5.500H11a.5.5 0 0 0 .416-.777z"/></svg>
<span class="t" style="left:86.00px;top:204.50px;font-size:23.5px;font-weight:700;color:#172033;transform:scaleX(0.9135);transform-origin:0 0;">GENIA</span>
<span class="t" style="left:86.00px;top:235.10px;font-size:14.3px;font-weight:400;color:#64748b;transform:scaleX(0.9168);transform-origin:0 0;">Timber Trading System</span>
<div class="a" style="left:1602px;top:202px;width:138px;height:44.5px;background:#f1f5f9;border-radius:10px"></div>
<svg class="a" style="left:1619.7px;top:214.6px" width="18.6" height="18.6" viewBox="0 0 16 16" fill="#475569"><path d="M11 6a3 3 0 1 1-6 0 3 3 0 0 1 6 0"/><path fill-rule="evenodd" d="M0 8a8 8 0 1 1 16 0A8 8 0 0 1 0 8m8-7a7 7 0 0 0-5.468 11.37C3.242 11.226 4.805 10 8 10s4.757 1.225 5.468 2.37A7 7 0 0 0 8 1"/></svg>
<div class="a" style="left:1665px;top:213px;width:57.5px;height:23px;background:#fff;border-radius:5px"></div>
<span class="t" style="left:1675.00px;top:219.00px;font-size:14.5px;font-weight:400;color:#64748b;transform:scaleX(0.9487);transform-origin:0 0;">Admin</span>
<div class="a" style="left:1758px;top:203.8px;width:112px;height:41.2px;background:#fef2f2;border-radius:10px"></div>
<svg class="a" style="left:1775.5px;top:216px" width="17" height="17" viewBox="0 0 16 16" fill="#e11d48"><path fill-rule="evenodd" d="M10 12.5a.5.5 0 0 1-.5.5h-8a.5.5 0 0 1-.5-.5v-9a.5.5 0 0 1 .5-.5h8a.5.5 0 0 1 .5.5v2a.5.5 0 0 0 1 0v-2A1.5 1.5 0 0 0 9.5 2h-8A1.5 1.5 0 0 0 0 3.5v9A1.5 1.5 0 0 0 1.5 14h8a1.5 1.5 0 0 0 1.5-1.5v-2a.5.5 0 0 0-1 0z"/><path fill-rule="evenodd" d="M15.854 8.354a.5.5 0 0 0 0-.708l-3-3a.5.5 0 0 0-.708.708L14.293 7.5H5.5a.5.5 0 0 0 0 1h8.793l-2.147 2.146a.5.5 0 0 0 .708.708z"/></svg>
<span class="t" style="left:1801.00px;top:216.75px;font-size:16px;font-weight:700;color:#e11d24;transform:scaleX(0.9409);transform-origin:0 0;">Logout</span>
<div class="a" style="left:1897px;top:181px;width:23px;height:827px;background:#fcfcfc"></div>
<svg class="a" style="left:1901px;top:188px;" width="15" height="12" viewBox="0 0 15 12"><path d="M7.5 2.6 L12.9 9.9 H2.1 Z" fill="#8b8b8b" stroke="#8b8b8b" stroke-width="2.4" stroke-linejoin="round"/></svg>
<svg class="a" style="left:1901px;top:992px;" width="15" height="12" viewBox="0 0 15 12"><path d="M7.5 9.6 L12.9 2.3 H2.1 Z" fill="#8b8b8b" stroke="#8b8b8b" stroke-width="2.4" stroke-linejoin="round"/></svg>
<div class="a" style="left:1902px;top:377px;width:13px;height:271px;background:#8b8b8b;border-radius:6.5px"></div>
<svg class="a" style="left:0;top:0" width="1920" height="1008" viewBox="0 0 1920 1008"><path d="M508.70 804.00 H1304.70" stroke="#eceef1" stroke-width="1.1"/><path d="M517.50 804.45 H1304.70" stroke="#d2d4d8" stroke-width="1"/><path d="M508.70 771.53 H1304.70" stroke="#eceef1" stroke-width="1.1"/><path d="M508.70 739.07 H1304.70" stroke="#eceef1" stroke-width="1.1"/><path d="M508.70 706.60 H1304.70" stroke="#eceef1" stroke-width="1.1"/><path d="M508.70 674.13 H1304.70" stroke="#eceef1" stroke-width="1.1"/><path d="M508.70 641.67 H1304.70" stroke="#eceef1" stroke-width="1.1"/><path d="M508.70 609.20 H1304.70" stroke="#eceef1" stroke-width="1.1"/><path d="M517.50 609.20 V812.80" stroke="#d4d6da" stroke-width="1.1"/><path d="M566.70 609.20 V812.80" stroke="#eceef1" stroke-width="1.1"/><path d="M615.90 609.20 V812.80" stroke="#eceef1" stroke-width="1.1"/><path d="M665.10 609.20 V812.80" stroke="#eceef1" stroke-width="1.1"/><path d="M714.30 609.20 V812.80" stroke="#eceef1" stroke-width="1.1"/><path d="M763.50 609.20 V812.80" stroke="#eceef1" stroke-width="1.1"/><path d="M812.70 609.20 V812.80" stroke="#eceef1" stroke-width="1.1"/><path d="M861.90 609.20 V812.80" stroke="#eceef1" stroke-width="1.1"/><path d="M911.10 609.20 V812.80" stroke="#eceef1" stroke-width="1.1"/><path d="M960.30 609.20 V812.80" stroke="#eceef1" stroke-width="1.1"/><path d="M1009.50 609.20 V812.80" stroke="#eceef1" stroke-width="1.1"/><path d="M1058.70 609.20 V812.80" stroke="#eceef1" stroke-width="1.1"/><path d="M1107.90 609.20 V812.80" stroke="#eceef1" stroke-width="1.1"/><path d="M1157.10 609.20 V812.80" stroke="#eceef1" stroke-width="1.1"/><path d="M1206.30 609.20 V812.80" stroke="#eceef1" stroke-width="1.1"/><path d="M1255.50 609.20 V812.80" stroke="#eceef1" stroke-width="1.1"/><path d="M524.39 804.00 V802.90 Q524.39 801.79 525.49 801.79 H558.71 Q559.81 801.79 559.81 802.90 V804.00 Z" fill="rgba(99,106,241,0.6)"/><path d="M622.79 804.00 V803.42 Q622.79 802.83 623.37 802.83 H657.63 Q658.21 802.83 658.21 803.42 V804.00 Z" fill="rgba(99,106,241,0.6)"/><path d="M671.99 804.00 V803.61 Q671.99 803.22 672.38 803.22 H707.02 Q707.41 803.22 707.41 803.61 V804.00 Z" fill="rgba(99,106,241,0.6)"/><path d="M721.19 804.00 V801.08 Q721.19 798.16 724.11 798.16 H753.69 Q756.61 798.16 756.61 801.08 V804.00 Z" fill="rgba(99,106,241,0.6)"/><path d="M770.39 804.00 V801.86 Q770.39 799.71 772.53 799.71 H803.67 Q805.81 799.71 805.81 801.86 V804.00 Z" fill="rgba(99,106,241,0.6)"/><path d="M868.79 804.00 V802.38 Q868.79 800.75 870.41 800.75 H902.59 Q904.21 800.75 904.21 802.38 V804.00 Z" fill="rgba(99,106,241,0.6)"/><path d="M917.99 804.00 V682.93 Q917.99 674.13 926.79 674.13 H944.61 Q953.41 674.13 953.41 682.93 V804.00 Z" fill="rgba(99,106,241,0.6)"/><path d="M1016.39 804.00 V682.93 Q1016.39 674.13 1025.19 674.13 H1043.01 Q1051.81 674.13 1051.81 682.93 V804.00 Z" fill="rgba(99,106,241,0.6)"/><path d="M1065.59 804.00 V618.00 Q1065.59 609.20 1074.39 609.20 H1092.21 Q1101.01 609.20 1101.01 618.00 V804.00 Z" fill="rgba(99,106,241,0.6)"/><path d="M1114.79 804.00 V682.93 Q1114.79 674.13 1123.59 674.13 H1141.41 Q1150.21 674.13 1150.21 682.93 V804.00 Z" fill="rgba(99,106,241,0.6)"/><path d="M1163.99 804.00 V802.38 Q1163.99 800.75 1165.61 800.75 H1197.79 Q1199.41 800.75 1199.41 802.38 V804.00 Z" fill="rgba(99,106,241,0.6)"/><path d="M1213.19 804.00 V803.29 Q1213.19 802.57 1213.90 802.57 H1247.90 Q1248.61 802.57 1248.61 803.29 V804.00 Z" fill="rgba(99,106,241,0.6)"/><path d="M1262.39 804.00 V747.87 Q1262.39 739.07 1271.19 739.07 H1289.01 Q1297.81 739.07 1297.81 747.87 V804.00 Z" fill="rgba(99,106,241,0.6)"/></svg>
<span class="t" style="left:497.74px;top:796.95px;font-size:13.6px;font-weight:400;color:#475569;">0</span>
<span class="t" style="left:482.61px;top:764.95px;font-size:13.6px;font-weight:400;color:#475569;">500</span>
<span class="t" style="left:471.27px;top:731.95px;font-size:13.6px;font-weight:400;color:#475569;">1,000</span>
<span class="t" style="left:471.27px;top:699.95px;font-size:13.6px;font-weight:400;color:#475569;">1,500</span>
<span class="t" style="left:471.27px;top:666.95px;font-size:13.6px;font-weight:400;color:#475569;">2,000</span>
<span class="t" style="left:471.27px;top:634.95px;font-size:13.6px;font-weight:400;color:#475569;">2,500</span>
<span class="t" style="left:471.27px;top:601.95px;font-size:13.6px;font-weight:400;color:#475569;">3,000</span>
<span class="t" style="left:542.00px;top:822.8px;font-size:13.55px;color:#475569;transform:translate(-100%,-50%) rotate(-30.93deg);transform-origin:100% 50%">Aina ya mbao 1*8</span>
<span class="t" style="left:591.20px;top:822.8px;font-size:13.55px;color:#475569;transform:translate(-100%,-50%) rotate(-30.93deg);transform-origin:100% 50%">Aina ya mbao 2*6 bodo</span>
<span class="t" style="left:640.40px;top:822.8px;font-size:13.55px;color:#475569;transform:translate(-100%,-50%) rotate(-30.93deg);transform-origin:100% 50%">Aina ya mbao 2*6 drl</span>
<span class="t" style="left:689.60px;top:822.8px;font-size:13.55px;color:#475569;transform:translate(-100%,-50%) rotate(-30.93deg);transform-origin:100% 50%">Aina ya mbao 2*6 kiwandani</span>
<span class="t" style="left:738.80px;top:822.8px;font-size:13.55px;color:#475569;transform:translate(-100%,-50%) rotate(-30.93deg);transform-origin:100% 50%">Aina ya mbao 2*6 serikal</span>
<span class="t" style="left:788.00px;top:822.8px;font-size:13.55px;color:#475569;transform:translate(-100%,-50%) rotate(-30.93deg);transform-origin:100% 50%">Cedar Panel 1.8m</span>
<span class="t" style="left:837.20px;top:822.8px;font-size:13.55px;color:#475569;transform:translate(-100%,-50%) rotate(-30.93deg);transform-origin:100% 50%">Eucalyptus Round Log 4m</span>
<span class="t" style="left:886.40px;top:822.8px;font-size:13.55px;color:#475569;transform:translate(-100%,-50%) rotate(-30.93deg);transform-origin:100% 50%">Kiln-dried Pine Plank 2m</span>
<span class="t" style="left:935.60px;top:822.8px;font-size:13.55px;color:#475569;transform:translate(-100%,-50%) rotate(-30.93deg);transform-origin:100% 50%">Lebanoni</span>
<span class="t" style="left:984.80px;top:822.8px;font-size:13.55px;color:#475569;transform:translate(-100%,-50%) rotate(-30.93deg);transform-origin:100% 50%">Mahogany Board 2.5m</span>
<span class="t" style="left:1034.00px;top:822.8px;font-size:13.55px;color:#475569;transform:translate(-100%,-50%) rotate(-30.93deg);transform-origin:100% 50%">Mkaretusi</span>
<span class="t" style="left:1083.20px;top:822.8px;font-size:13.55px;color:#475569;transform:translate(-100%,-50%) rotate(-30.93deg);transform-origin:100% 50%">Mvinje</span>
<span class="t" style="left:1132.40px;top:822.8px;font-size:13.55px;color:#475569;transform:translate(-100%,-50%) rotate(-30.93deg);transform-origin:100% 50%">Mwelezi</span>
<span class="t" style="left:1181.60px;top:822.8px;font-size:13.55px;color:#475569;transform:translate(-100%,-50%) rotate(-30.93deg);transform-origin:100% 50%">Sapele Decking Board 2m</span>
<span class="t" style="left:1230.80px;top:822.8px;font-size:13.55px;color:#475569;transform:translate(-100%,-50%) rotate(-30.93deg);transform-origin:100% 50%">Teak Beam 3m</span>
<span class="t" style="left:1280.00px;top:822.8px;font-size:13.55px;color:#475569;transform:translate(-100%,-50%) rotate(-30.93deg);transform-origin:100% 50%">trial</span>
<div class="a" style="left:0px;top:1008px;width:1920px;height:72px;background:#eeeeee"></div>
<div class="a" style="left:0px;top:1007.8px;width:1920px;height:1.9px;background:#b4b4b4"></div>
<svg class="a" style="left:28px;top:1018px;" width="60" height="52" viewBox="0 0 60 52"><defs><linearGradient id="sun" x1="0.1" y1="0.1" x2="0.8" y2="0.95"><stop offset="0" stop-color="#f6bb2c"/><stop offset="0.5" stop-color="#f0921c"/><stop offset="1" stop-color="#ee650c"/></linearGradient><linearGradient id="clA" gradientUnits="userSpaceOnUse" x1="0" y1="8" x2="0" y2="21.6"><stop offset="0" stop-color="#5e8ee6"/><stop offset="0.3" stop-color="#b4cdf3"/><stop offset="0.75" stop-color="#d6e4f9"/><stop offset="1" stop-color="#8aaeee"/></linearGradient><linearGradient id="clB" gradientUnits="userSpaceOnUse" x1="0" y1="26" x2="0" y2="40"><stop offset="0" stop-color="#5e8ee6"/><stop offset="0.3" stop-color="#b4cdf3"/><stop offset="0.75" stop-color="#d6e4f9"/><stop offset="1" stop-color="#8aaeee"/></linearGradient></defs>
<circle cx="20" cy="26" r="15" fill="url(#sun)"/><g fill="url(#clA)"><circle cx="6.81" cy="16.70" r="4.90"/><circle cx="11.22" cy="13.98" r="5.98"/><circle cx="16.79" cy="16.43" r="5.17"/><rect x="6.04" y="14.80" width="11.90" height="6.80"/></g><g fill="url(#clB)"><circle cx="22.09" cy="34.96" r="5.04"/><circle cx="26.96" cy="32.16" r="6.16"/><circle cx="33.11" cy="34.68" r="5.32"/><rect x="21.24" y="33.00" width="13.14" height="7.00"/></g>
<circle cx="30.6" cy="12.2" r="11.7" fill="#c42b1c"/></svg>
<span class="t" style="left:53.97px;top:1022.25px;font-size:17px;font-weight:400;color:#fff;">2</span>
<svg class="a" style="left:341px;top:1027.5px;" width="35" height="35" viewBox="0 0 35 35"><defs><linearGradient id="wn" x1="0" y1="0" x2="1" y2="1"><stop offset="0" stop-color="#52c8fb"/><stop offset="0.5" stop-color="#1a93e4"/><stop offset="1" stop-color="#0568c4"/></linearGradient></defs>
<path d="M0 1 Q0 0 1 0 H16.4 V16.4 H0 Z M18.4 0 H34 Q35 0 35 1 V16.4 H18.4 Z M0 18.4 H16.4 V34.6 H1 Q0 34.6 0 33.6 Z M18.4 18.4 H35 V33.6 Q35 34.6 34 34.6 H18.4 Z" fill="url(#wn)"/></svg>
<div class="a" style="left:397px;top:1020.5px;width:328px;height:46.5px;background:#fafafa;border:1px solid #dcdcdc;border-bottom-color:#c9c9c9;border-radius:23.5px;box-shadow:0 1px 1.5px rgba(0,0,0,.07)"></div>
<svg class="a" style="left:412px;top:1031px;" width="26" height="26" viewBox="0 0 26 26"><circle cx="11.6" cy="11.6" r="8.6" fill="none" stroke="#1d1d1d" stroke-width="2.5"/><path d="M17.8 18 L23.2 23.4" stroke="#1d1d1d" stroke-width="3" stroke-linecap="round"/></svg>
<span class="t" style="left:452.50px;top:1034.25px;font-size:21px;font-weight:400;color:#5c5c5c;transform:scaleX(0.9091);transform-origin:0 0;">Search</span>
<svg class="a" style="left:743px;top:1027px;" width="38" height="35" viewBox="0 0 38 35"><defs><linearGradient id="tv1" x1="0" y1="0" x2="0" y2="1"><stop offset="0" stop-color="#3d3d3d"/><stop offset="1" stop-color="#111"/></linearGradient><linearGradient id="tv2" x1="0" y1="0" x2="1" y2="1"><stop offset="0" stop-color="#fdfdfd"/><stop offset="1" stop-color="#dadada"/></linearGradient></defs>
<rect x="0.8" y="9.2" width="27" height="24.4" rx="2.2" fill="url(#tv1)"/><rect x="9.4" y="0.6" width="27.6" height="23.6" rx="1.8" fill="url(#tv2)" fill-opacity="0.86"/><rect x="9.4" y="9.2" width="18.4" height="15" fill="#b9b9b9" fill-opacity="0.9"/></svg>
<svg class="a" style="left:810px;top:1027px;" width="36" height="34" viewBox="0 0 36 34"><defs><linearGradient id="cp1" x1="0" y1="0" x2="1" y2="1"><stop offset="0" stop-color="#2aa8e8"/><stop offset="0.5" stop-color="#1f6fd6"/><stop offset="1" stop-color="#2a2fae"/></linearGradient>
<linearGradient id="cp2" x1="0.3" y1="0" x2="0.2" y2="1"><stop offset="0" stop-color="#2fb0ea"/><stop offset="0.45" stop-color="#6cc76a"/><stop offset="0.8" stop-color="#e8c62a"/><stop offset="1" stop-color="#f3a928"/></linearGradient>
<linearGradient id="cp3" x1="0.6" y1="0" x2="0.3" y2="1"><stop offset="0" stop-color="#a65ce8"/><stop offset="0.5" stop-color="#e8589c"/><stop offset="1" stop-color="#f5863a"/></linearGradient></defs>
<path d="M10 2.600 Q11.500 0.400 14.500 0.400 H22 Q25.400 0.400 26.300 3.600 L28 9.600 H21 L19 3.600 Z" fill="url(#cp1)"/>
<path d="M9.600 1.200 Q5.600 1.600 4.400 5.600 L0.700 18 Q-0.600 23.800 5 24 H12.600 L17.600 6.400 Q18.800 1.200 14 1.200 Z" fill="url(#cp2)"/>
<path d="M26.400 32.800 Q30.400 32.400 31.600 28.400 L35.300 16 Q36.600 10.200 31 10 H23.400 L18.400 27.600 Q17.200 32.800 22 32.800 Z" fill="url(#cp3)"/>
<path d="M26 31.400 Q24.500 33.600 21.500 33.600 H14 Q10.600 33.600 9.700 30.400 L8 24.400 H15 L17 30.400 Z" fill="#ef5f38"/></svg>
<svg class="a" style="left:875px;top:1027px;" width="38" height="34" viewBox="0 0 38 34"><defs><linearGradient id="fe" x1="0" y1="0" x2="0" y2="1"><stop offset="0" stop-color="#ffd96a"/><stop offset="1" stop-color="#f7bb24"/></linearGradient></defs>
<path d="M0.500 3 Q0.500 1 2.500 1 H12 Q13.200 1 14 1.800 L16.600 4.400 H35 Q37 4.400 37 6.400 V10 H0.500 Z" fill="#e3a008"/>
<path d="M0.500 7.500 Q0.500 5.600 2.400 5.600 H35.200 Q37.200 5.600 37.200 7.500 V31.400 Q37.200 33.400 35.200 33.400 H2.400 Q0.500 33.400 0.500 31.400 Z" fill="url(#fe)"/>
<path d="M6.500 33.400 V27 Q6.500 23.600 10 23.600 H27.600 Q31 23.600 31 27 V33.400 Z" fill="#1673c9"/><rect x="10.800" y="27" width="16" height="2.200" rx="1.100" fill="#0d4f96"/></svg>
<svg class="a" style="left:941px;top:1026px;" width="37" height="37" viewBox="0 0 37 37"><defs><linearGradient id="st" x1="0" y1="0" x2="0" y2="1"><stop offset="0" stop-color="#12519c"/><stop offset="1" stop-color="#163564"/></linearGradient></defs>
<path d="M10 5.500 V3 Q10 1.200 12 1.200 H25 Q27 1.200 27 3 V5.500" fill="none" stroke="#39c4f4" stroke-width="2.200"/>
<path d="M0.600 7.200 Q0.600 5.200 2.600 5.200 H34.400 Q36.400 5.200 36.400 7.200 V30 Q36.400 36.400 30 36.400 H7 Q0.600 36.400 0.600 30 Z" fill="url(#st)"/>
<rect x="10.600" y="13.400" width="7.400" height="7.400" fill="#f25022"/><rect x="19.200" y="13.400" width="7.400" height="7.400" fill="#7fba00"/><rect x="10.600" y="22" width="7.400" height="7.400" fill="#00a4ef"/><rect x="19.200" y="22" width="7.400" height="7.400" fill="#ffb900"/></svg>
<svg class="a" style="left:1007px;top:1026px;" width="38" height="36" viewBox="0 0 38 36"><defs><linearGradient id="gr" x1="0" y1="0" x2="1" y2="1"><stop offset="0" stop-color="#4fc3f7"/><stop offset="1" stop-color="#1479d4"/></linearGradient></defs>
<g transform="translate(21,17.8)" fill="url(#gr)"><rect x="-4.100" y="-16.900" width="8.200" height="8" rx="1.800" transform="rotate(22)"/><rect x="-4.100" y="-16.900" width="8.200" height="8" rx="1.800" transform="rotate(67)"/><rect x="-4.100" y="-16.900" width="8.200" height="8" rx="1.800" transform="rotate(112)"/><rect x="-4.100" y="-16.900" width="8.200" height="8" rx="1.800" transform="rotate(157)"/><rect x="-4.100" y="-16.900" width="8.200" height="8" rx="1.800" transform="rotate(202)"/><rect x="-4.100" y="-16.900" width="8.200" height="8" rx="1.800" transform="rotate(247)"/><rect x="-4.100" y="-16.900" width="8.200" height="8" rx="1.800" transform="rotate(292)"/><rect x="-4.100" y="-16.900" width="8.200" height="8" rx="1.800" transform="rotate(337)"/><circle r="12.400"/></g>
<circle cx="21.500" cy="17.800" r="7.400" fill="#e3e7ee"/><path d="M21.500 17.800 L21.500 25.200 A7.400 7.400 0 0 0 28.400 15.200 Z" fill="#b4bac4"/>
<rect x="0.600" y="9" width="18.400" height="17.600" rx="1.600" fill="#1566c0"/></svg>
<span class="t" style="left:1011.56px;top:1038.00px;font-size:14.5px;font-weight:700;color:#fff;">A</span>
<svg class="a" style="left:1073px;top:1026px;" width="38" height="37" viewBox="0 0 38 37"><g fill="none" stroke-linecap="round" stroke-width="6.200"><path d="M28 31.800 L4.600 13.600" stroke="#0f86dd"/><path d="M28 5.200 L4.600 23.400" stroke="#0b73c6"/></g>
<path d="M27 0.700 L36.800 5.300 V31.700 L27 36.300 Z" fill="#2aa4f0" stroke="#2aa4f0" stroke-width="0.600" stroke-linejoin="round"/>
<path d="M27 10.600 L16.600 18.500 L27 26.400 Z" fill="#eeeeee"/></svg>
<svg class="a" style="left:1140px;top:1026px;" width="36" height="37" viewBox="0 0 36 37"><defs><linearGradient id="xa" x1="0" y1="0" x2="0" y2="1"><stop offset="0" stop-color="#f7923c"/><stop offset="0.180" stop-color="#f07b1f"/><stop offset="1" stop-color="#e2680f"/></linearGradient></defs>
<rect x="0.500" y="0.500" width="35" height="36" rx="4.500" fill="url(#xa)" stroke="#c65a12" stroke-width="1"/>
<g fill="none" stroke="#fff" stroke-width="3.800" stroke-linecap="round" stroke-linejoin="round"><path d="M12 10.800 Q7.600 10.800 7.600 14.600 Q7.600 17.400 10.400 18.500 Q7.600 19.600 7.600 22.400 Q7.600 26.200 12 26.200 Q15 26.200 18 23 Q21 26.200 24 26.200 Q28.400 26.200 28.400 22.400 Q28.400 19.600 25.600 18.500 Q28.400 17.400 28.400 14.600 Q28.400 10.800 24 10.800 Q21 10.800 18 14 Q15 10.800 12 10.800 Z"/><path d="M13.400 14.200 L22.600 22.800 M22.600 14.200 L13.400 22.800"/></g></svg>
<svg class="a" style="left:1205px;top:1026px;" width="38" height="37" viewBox="0 0 38 37"><defs><linearGradient id="ed1" x1="0" y1="0" x2="1" y2="0.300"><stop offset="0" stop-color="#1b9de2"/><stop offset="0.550" stop-color="#35c1c9"/><stop offset="1" stop-color="#6fdc5a"/></linearGradient>
<linearGradient id="ed2" x1="0" y1="0" x2="1" y2="1"><stop offset="0" stop-color="#0c59a4"/><stop offset="1" stop-color="#114a8b"/></linearGradient>
<linearGradient id="ed3" x1="0" y1="0" x2="0" y2="1"><stop offset="0" stop-color="#1b9de2"/><stop offset="1" stop-color="#1467c4"/></linearGradient></defs>
<path d="M1 17.500 C1.600 7 9.600 0.600 19 0.600 C30 0.600 37.400 8.600 37.400 16.600 C37.400 22.600 33 26 28.400 26 C24 26 21.600 24.400 21.600 22.800 C21.600 21.600 23.400 21.200 23.400 18.400 C23.400 15 20.400 11.400 15 11.400 C8.400 11.400 2.400 15 1 17.500 Z" fill="url(#ed1)"/>
<path d="M1 17.500 C0.400 28 8.400 36.400 18.600 36.400 C23.600 36.400 27 35 29.600 33.200 C31.200 32 34 29.200 34.800 27.400 C35.200 26.400 34.400 26 33.600 26.600 C31.600 28 28.600 28.800 25.600 28.600 C18 28.200 13.600 22.600 13.600 17.600 C13.600 14.400 15.400 12 17 11.600 C9 10.600 2.400 14 1 17.500 Z" fill="url(#ed2)"/>
<path d="M1 17.500 C1 28.400 9 36.400 18.600 36.400 C13 34 9.400 28.400 9.400 22.600 C9.400 16.600 13 12.400 17 11.600 C9 10.600 2.400 14 1 17.500 Z" fill="url(#ed3)"/></svg>
<div class="a" style="left:1261px;top:1014.8px;width:58px;height:58.2px;background:#f6f6f6;border:1px solid #e4e4e4;border-bottom-color:#d9d9d9;border-radius:7px"></div>
<svg class="a" style="left:1272px;top:1026px;" width="36" height="36" viewBox="0 0 36 36"><circle cx="18" cy="18" r="17.600" fill="#fff"/>
<path d="M18 18 L2.760 9.200 A17.600 17.600 0 0 1 33.240 9.200 Z" fill="#ea4335"/>
<path d="M18 18 L33.240 9.200 A17.600 17.600 0 0 1 18 35.600 Z" fill="#fbbc04"/>
<path d="M18 18 L18 35.600 A17.600 17.600 0 0 1 2.760 9.200 Z" fill="#34a853"/>
<path d="M18 9.200 H33.240 A17.600 17.600 0 0 0 2.760 9.200 L10.380 22.400 Z" fill="#ea4335"/>
<path d="M25.620 22.400 L18 35.600 A17.600 17.600 0 0 0 33.240 9.200 H18 Z" fill="#fbbc04"/>
<path d="M10.380 22.400 L2.760 9.200 A17.600 17.600 0 0 0 18 35.600 L25.620 22.400 Z" fill="#34a853"/>
<circle cx="18" cy="18" r="8.800" fill="#fff"/><circle cx="18" cy="18" r="7" fill="#4285f4"/></svg>
<div class="a" style="left:1279px;top:1068px;width:22px;height:4.5px;background:#0067c0;border-radius:2.250px"></div>
<div class="a" style="left:1088.0px;top:1068px;width:9px;height:4.5px;background:#8c8c8c;border-radius:2.250px"></div>
<div class="a" style="left:1153.5px;top:1068px;width:9px;height:4.5px;background:#8c8c8c;border-radius:2.250px"></div>
<div class="a" style="left:1219.5px;top:1068px;width:9px;height:4.5px;background:#8c8c8c;border-radius:2.250px"></div>
<div class="a" style="left:1351.5px;top:1068px;width:9px;height:4.5px;background:#8c8c8c;border-radius:2.250px"></div>
<svg class="a" style="left:1337px;top:1026px;" width="38" height="38" viewBox="0 0 38 38"><path d="M19 2.200 A16 16 0 0 0 5.200 26.400 L2.600 35.600 L12 33 A16 16 0 1 0 19 2.200 Z" fill="none" stroke="#1d8f52" stroke-width="3.700" stroke-linejoin="round"/>
<path d="M12.600 9.800 Q10.400 9.800 10 12.600 Q9.600 16.800 14 21.600 Q18.800 26.600 23.600 27 Q26.600 27 27.600 24.600 Q28 23.200 27 22.600 L23.800 20.800 Q22.800 20.400 22.200 21.200 L21.200 22.400 Q20.600 23 19.800 22.600 Q17.200 21.400 15 18.400 Q14.400 17.600 15 17 L16 15.800 Q16.400 15.200 16 14.400 L14.600 10.800 Q14.200 9.800 13.200 9.800 Z" fill="#1d8f52"/></svg>
<div class="a" style="left:1358px;top:1019px;width:24px;height:24px;background:#0b74d9;border-radius:50%"></div>
<span class="t" style="left:1365.27px;top:1023.25px;font-size:17px;font-weight:400;color:#fff;">1</span>
<svg class="a" style="left:1556px;top:1038px;" width="18" height="11" viewBox="0 0 18 11"><path d="M1.400 9.600 L9 2 L16.600 9.600" fill="none" stroke="#1a1a1a" stroke-width="2" stroke-linecap="round" stroke-linejoin="round"/></svg>
<svg class="a" style="left:1600px;top:1033px;" width="27" height="25" viewBox="0 0 27 25"><defs><linearGradient id="cg" x1="0" y1="0" x2="1" y2="1"><stop offset="0" stop-color="#5a5a5a"/><stop offset="1" stop-color="#c9c9c9"/></linearGradient></defs>
<path d="M6.500 19.500 Q1 19.500 1 14.400 Q1 10 5.400 9.400 Q6.600 3 13 3 Q18.600 3 20.400 8 Q25 8.400 25 13.400 Q25 19.500 19 19.500 Z" fill="url(#cg)" stroke="#3d3d3d" stroke-width="1.300"/>
<circle cx="18.600" cy="17.600" r="7.200" fill="#0b74d9" stroke="#eee" stroke-width="1"/><rect x="17.700" y="16.400" width="1.900" height="5" fill="#fff"/><circle cx="18.600" cy="13.900" r="1.150" fill="#fff"/></svg>
<svg class="a" style="left:1648px;top:1030px;" width="27" height="28" viewBox="0 0 27 28"><g fill="none" stroke="#1a1a1a" stroke-width="1.500" stroke-linecap="round" stroke-linejoin="round"><path d="M3 12 A10 10 0 0 1 21.600 6.400 M17.600 6.800 H22.600 V1.800"/><path d="M23 16 A10 10 0 0 1 4.400 21.600 M8.400 21.200 H3.400 V26.200"/></g><circle cx="19" cy="20.400" r="6.600" fill="#0b74d9"/></svg>
<svg class="a" style="left:1695px;top:1033px;" width="27" height="21" viewBox="0 0 27 21"><g fill="none" stroke="#1a1a1a" stroke-width="1.900" stroke-linecap="round"><path d="M1.600 8.200 Q13.500 -2.600 25.400 8.200"/><path d="M5.600 12 Q13.500 4.800 21.400 12"/><path d="M9.600 15.600 Q13.500 12 17.400 15.600"/></g><circle cx="13.500" cy="18.600" r="1.900" fill="#1a1a1a"/></svg>
<svg class="a" style="left:1732px;top:1033px;" width="26" height="22" viewBox="0 0 26 22"><path d="M1.200 7.400 H5.200 L11 2 V20 L5.200 14.600 H1.200 Z" fill="none" stroke="#1a1a1a" stroke-width="1.600" stroke-linejoin="round"/>
<g fill="none" stroke-linecap="round" stroke-width="1.600"><path d="M14.400 7.600 Q16.400 11 14.400 14.400" stroke="#1a1a1a"/><path d="M17.600 5 Q21 11 17.600 17" stroke="#1a1a1a"/><path d="M21 2.600 Q25.600 11 21 19.400" stroke="#b5b5b5"/></g></svg>
<svg class="a" style="left:1767px;top:1031px;" width="27" height="22" viewBox="0 0 27 22"><rect x="2.800" y="6.600" width="20.400" height="13.200" rx="3" fill="none" stroke="#1a1a1a" stroke-width="1.700"/><rect x="5.400" y="9.200" width="15.200" height="8" rx="1.200" fill="#1a1a1a"/><rect x="23.600" y="10.800" width="2.400" height="4.800" rx="1.200" fill="#1a1a1a"/>
<path d="M9.600 0.400 L1.800 9.200 H5.800 L3 14.400 L11.400 4.800 H7.600 Z" fill="#1a1a1a" stroke="#eeeeee" stroke-width="1.400" paint-order="stroke"/></svg>
<span class="t" style="left:1826.81px;top:1023.50px;font-size:17.5px;font-weight:400;color:#1a1a1a;transform:scaleX(0.9818);transform-origin:100% 0;">3:04 PM</span>
<span class="t" style="left:1823.88px;top:1047.50px;font-size:17.5px;font-weight:400;color:#1a1a1a;transform:scaleX(1.0716);transform-origin:100% 0;">1/2/2026</span>
</body></html>
